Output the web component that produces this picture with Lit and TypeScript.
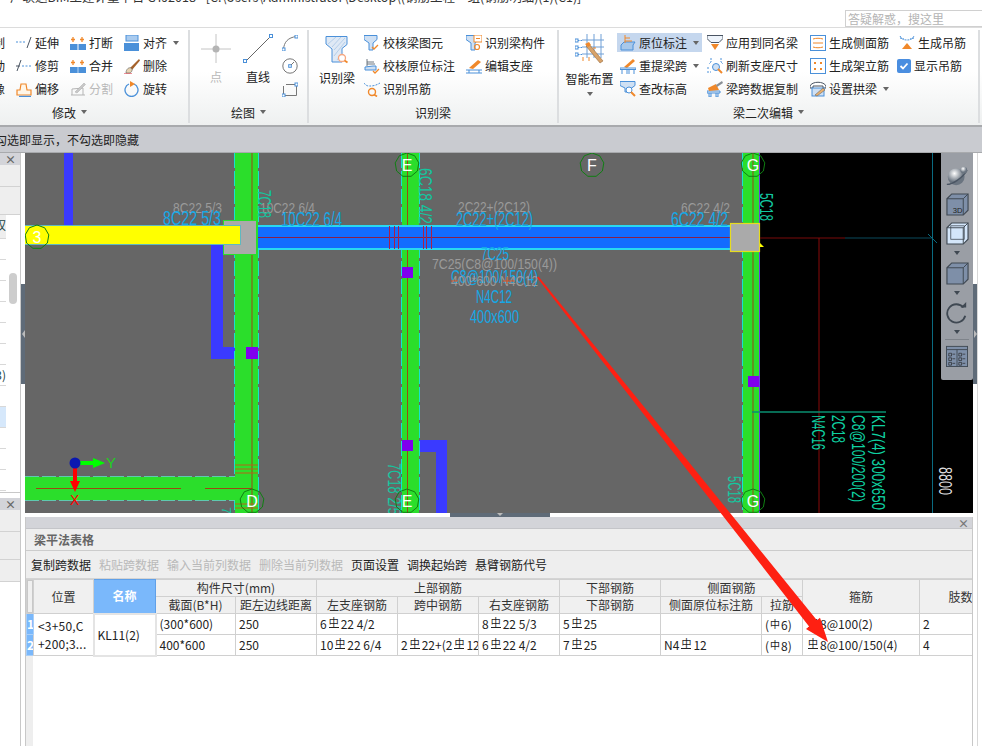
import { LitElement, html, css, svg } from "lit";
import { customElement } from "lit/decorators.js";

const B = "#4a90d9", O = "#f0882a", G = "#8a8f96", D = "#4a5563";
const ic = (c: any, s = 16, vb = 16) => html`<svg class="ic" width=${s} height=${s} viewBox="0 0 ${vb} ${vb}" fill="none">${c}</svg>`;

const icons: Record<string, any> = {
  extend: svg`<path d="M0 7h10" stroke=${B} stroke-dasharray="2 1.5"/><path d="M11 13 15 2" stroke=${D}/>`,
  trim: svg`<path d="M5 2 1 13" stroke=${D}/><path d="M0 8h4" stroke=${D}/><path d="M6 8h10" stroke=${B} stroke-dasharray="2 1.5"/>`,
  offset: svg`<path d="M1 14V9h3l1-6h5l1 6h4v5z" stroke=${O} stroke-width="1.2" fill="#fff6e8"/><path d="M3 15.5h12" stroke=${B} stroke-width="1.4"/>`,
  brk: svg`<rect x="0" y="9" width="7.5" height="6" fill=${B}/><rect x="8.5" y="9" width="7.5" height="6" fill=${B}/><path d="M3 2v5M1 4.5h4M12 2v5M10 4.5h4" stroke=${O} stroke-width="1.3"/>`,
  merge: svg`<rect x="0" y="9" width="16" height="6" fill=${B}/><path d="M8 9v6" stroke="#b8d4f0"/><path d="M3 2v5M1 4.5h4M12 2v5M10 4.5h4" stroke=${O} stroke-width="1.3"/>`,
  split: svg`<path d="M1 14h14M2 14V8l11-1v7" stroke="#b5b5b5"/><path d="M5 11 14 2l1.5 1.5L7 12z" fill="#c8c8c8" stroke="#aaa" stroke-width=".5"/>`,
  align: svg`<rect x="2" y="0" width="12" height="6" fill="#a9cbef" stroke=${B}/><rect x="0" y="8" width="15" height="8" fill=${B}/>`,
  del: svg`<path d="M6 10 15 1l1 1.5L8 12z" fill="#a5622b"/><path d="M2 15c0-4 3-6 5-5s1 4-1 5z" fill="#e6d2b0" stroke="#555" stroke-width=".6"/><path d="M0 16h8" stroke="#d23"/>`,
  rotate: svg`<path d="M5 3a6.5 6.5 0 1 0 5 0" stroke=${B} stroke-width="1.3"/><path d="M6 0v6l5-3z" fill=${O}/>`,
  arc: svg`<path d="M1.5 14.5C2 7 6 2.5 14.5 1.5" stroke="#777"/><rect x="0" y="13" width="3" height="3" fill="#fff" stroke=${B}/><rect x="13" y="0" width="3" height="3" fill="#fff" stroke=${B}/>`,
  circle: svg`<circle cx="8" cy="8" r="7.2" stroke="#777"/><rect x="6.7" y="6.7" width="2.6" height="2.6" fill="#fff" stroke=${B}/><path d="M9 7 12 4" stroke="#777"/>`,
  rect: svg`<path d="M1.5 5v9.5h13V3.500H4" stroke="#777"/><rect x="0" y="13" width="3" height="3" fill="#fff" stroke=${B}/><rect x="13" y="2" width="3" height="3" fill="#fff" stroke=${B}/>`,
  chkBeam: svg`<path d="M0 .5h13v4L9 8v7H5V8L0 4.500z" fill="#cfe0f3" stroke=${B}/><path d="M8 12l2 2 4-4" stroke=${O} stroke-width="1.3"/>`,
  chkMark: svg`<path d="M1 12V9l8-1h3v4H1z" fill="#cfe0f3" stroke=${B}/><path d="M3 8V1M3 4h7M3 6h8" stroke=${D} stroke-width=".8"/><path d="M9 13l2 2 4-4" stroke=${O} stroke-width="1.3"/>`,
  hanger: svg`<path d="M0 2c2 3 4 3 6 3s5 0 10-3" stroke=${B} stroke-dasharray="2 1.200"/><circle cx="8" cy="11" r="3.500" stroke=${O} stroke-width="1.400"/><path d="M10 13.500l3 2" stroke=${O} stroke-width="1.600"/>`,
  comp: svg`<path d="M0 .5h13v4L9 8v7H5V8L0 4.500z" fill="#cfe0f3" stroke=${B}/><rect x="8" y="0" width="8" height="7" fill="#fff" stroke=${O}/><path d="M10 3.500h4" stroke=${O}/><circle cx="11" cy="12" r="2.500" stroke=${O} stroke-width="1.200"/>`,
  editSup: svg`<path d="M0 12h16M0 15h16M3 12v3M13 12v3" stroke=${B}/><path d="M3 10 12 2l3 2-8 7z" fill=${O}/>`,
  origin: svg`<path d="M1 10l3-3h11l-2 3v5H1z" fill="#a8c8ea" stroke=${B}/><path d="M5 0v8M5 3h5M5 6h7" stroke=${O}/>`,
  relift: svg`<path d="M4 9 13 1l2 2-8 7z" fill=${O}/><path d="M0 10h16v1.500H0zM2 12v4M7 12v4M9 12v4M14 12v4" stroke=${B}/>`,
  lookup: svg`<path d="M0 .5h15v4l-4 3V11H5V7L0 4.500z" fill="#cfe0f3" stroke=${B}/><circle cx="9" cy="9" r="3" fill="#fff" stroke=${B} stroke-width="1"/><path d="M11 11l4 4" stroke=${O} stroke-width="2"/>`,
  apply: svg`<path d="M0 .5h16v3l-4 4H4l-4-4z" stroke=${D} fill="#eef4fb"/><path d="M4 9h8l-4 6z" fill=${O}/>`,
  refresh: svg`<circle cx="9" cy="9" r="3.500" fill="#cfe0f3" stroke=${B}/><path d="M4 0v4L2 6M14 0v4l2 2M0 10h3M0 14h4" stroke=${B} stroke-dasharray="2 1"/><path d="M11 11l4 4" stroke=${O} stroke-width="2"/>`,
  copySpan: svg`<path d="M0 10h13v2H0zM2 12v4h2v-4M9 12v4h2v-4" fill="#e6eef7" stroke=${B}/><path d="M1 7 9 3l3 6-10 1z" fill=${O}/><path d="M9 4 15 0l1 2-6 4z" fill=${G}/>`,
  side: svg`<rect x=".5" y=".5" width="15" height="15" fill="#fff" stroke=${B}/><path d="M3 4c3-1 7-1 10 0M3 8h10M3 12c3 1 7 1 10 0" stroke=${O}/>`,
  frame: svg`<rect x=".5" y=".5" width="15" height="15" fill="#fff" stroke=${B}/><rect x="4" y="4" width="2" height="2" fill=${O}/><rect x="10" y="4" width="2" height="2" fill=${O}/><rect x="4" y="10" width="2" height="2" fill=${O}/><rect x="10" y="10" width="2" height="2" fill=${O}/>`,
  arch: svg`<path d="M0 5C2 0 14 0 16 5v2h-3V5H3v2H0z" fill="#fff" stroke=${D}/><rect x="2" y="7" width="12" height="8" fill="#cfe0f3" stroke=${B}/><path d="M5 14 13 7l2 2-8 6z" fill="#e8b070" stroke="#555" stroke-width=".5"/>`,
  genHang: svg`<path d="M1 1c2 4 5 4 7 4s5 0 7-4M1 3l4 1M15 3l-4 1" stroke=${B} stroke-dasharray="2 1"/><path d="M3 14h10L8 8z" fill=${O}/>`,
};
const bigBeam = svg`<path d="M1 .5h21v8l-5 4V26H7V13L1 8z" fill="#dfe9f5" stroke=${B}/><path d="M3 8 11 1M7 11l9-10M9 14l11-12M9 20l11-14M12 24l6-8" stroke="#a9c6e6" stroke-width=".8"/><circle cx="17" cy="22" r="3.500" fill="#fff" stroke="#f6a882" stroke-width="1.300"/><path d="M19.500 24.500l3 2" stroke=${O} stroke-width="1.800"/>`;
const smart = svg`<path d="M7 6h22M7 13h22M7 20h22M12 0v24M19 0v24M26 0v24" stroke="#6f9fd6"/><rect x="0" y="5" width="3" height="3" fill="#fff" stroke=${B}/><rect x="0" y="12" width="3" height="3" fill="#fff" stroke=${B}/><rect x="0" y="19" width="3" height="3" fill="#fff" stroke=${B}/><path d="M3 6.500h5M3 13.500h5M3 20.500h5" stroke=${B} stroke-dasharray="1.500 1"/><path d="M11 12l3-2 14 17-3 2z" fill="#d8a36a" stroke="#8a5a2a" stroke-width=".5"/><path d="M10 10l4-2 2 3-3 2z" fill=${O}/><path d="M21 14h-3M8 23v4M14 23v4" stroke=${O}/>`;

const rb = (before: string, after: string) => html`${before}<span class="rb">中</span>${after}`;

const cad = (x: number, y: number, t: string, w: number, size: number, color: string, rot = 0) =>
  svg`<text x=${x} y=${y} textLength=${w} lengthAdjust="spacingAndGlyphs" font-size=${size} fill=${color} font-family="Liberation Sans, sans-serif" transform=${rot ? `rotate(${rot} ${x} ${y})` : ""}>${t}</text>`;

const hex = (cx: number, cy: number, l: string) => {
  const pts = Array.from({ length: 9 }, (_, i) => {
    const a = (i / 9) * Math.PI * 2 - Math.PI / 2;
    return `${(cx + 12 * Math.cos(a)).toFixed(1)},${(cy + 12 * Math.sin(a)).toFixed(1)}`;
  }).join(" ");
  return svg`<polygon points=${pts} fill="none" stroke="#0f7f12"/><text x=${cx} y=${cy + 6} text-anchor="middle" font-size="16" fill="#fff" font-family="Liberation Sans, sans-serif">${l}</text>`;
};

const col = (x1: number, x2: number, red: number) => svg`
  <rect x=${x1} y="153" width=${x2 - x1} height="360" fill="#2bde2b"/>
  <path d="M${x1 - 0.5} 153V513M${x2 + 0.5} 153V513" stroke="#19e0d0" stroke-dasharray="15 3"/>
  <path d="M${red} 153V513" stroke="#9a4a12"/>`;

const CY = "#14a8e6", GR = "#9a9a9a", TL = "#12c8a0", KL = "#0fd0a0";

const canvas = svg`
  <rect x="25" y="153" width="948" height="360" fill="#666"/>
  <rect x="760" y="153" width="213" height="360" fill="#000"/>
  <rect x="64" y="153" width="9" height="72" fill="#3a3aff"/>
  <path d="M211 244h12v103h24v12h-36z" fill="#3a3aff"/>
  <path d="M419 440h28v73h-11v-61h-17z" fill="#3a3aff"/>
  ${col(235, 258, 252)}
  ${col(402, 419, 407.5)}
  ${col(743, 759, 753)}
  <path d="M759.500 153V513" stroke="#6a3ae0"/>
  <rect x="25" y="477" width="210" height="23" fill="#2bde2b"/>
  <path d="M25 476.500H235M25 500.500H235" stroke="#5fc8b0" stroke-dasharray="14 3"/>
  <path d="M36 488.500H181M205 488.500H252" stroke="#9a4a12"/>
  <path d="M235 465h23M235 469h23M235 473h23M235 504h23M235 508h23" stroke="#b8621a" stroke-width="1.200"/>
  <rect x="258" y="225" width="473" height="25" fill="#28d8f0"/>
  <rect x="258" y="227" width="473" height="21" fill="#126cff"/>
  <path d="M258 237.500H731" stroke="#8a2048"/>
  <path d="M389.500 226v23M394.500 226v23M398.500 226v23M423.500 226v23M426.500 226v23M431.500 226v23" stroke="#a8204a"/>
  <rect x="223.500" y="220.500" width="33" height="34" fill="#aaa" stroke="#2bde2b"/>
  <rect x="25" y="225" width="216" height="20" fill="#5fb8c0"/>
  <rect x="25" y="226" width="215" height="18" fill="#ff0"/>
  <rect x="730.500" y="223.500" width="29" height="28" fill="#aaa" stroke="#e6dc20" stroke-width="1.200"/>
  <path d="M760 243l4 4h-4z" fill="#ff0"/>
  <rect x="246" y="347" width="12" height="12" fill="#8000ee"/>
  <rect x="402" y="267" width="11" height="11" fill="#8000ee"/>
  <rect x="402" y="440" width="11" height="11" fill="#8000ee"/>
  <rect x="748" y="376" width="11" height="11" fill="#8000ee"/>
  <path d="M760 238h85" stroke="#7a0a0a"/><path d="M845 238h88" stroke="#0a4a5c"/>
  <path d="M928 234l9 9" stroke="#0a6a80"/>
  <path d="M819 238V513" stroke="#8a0a0a"/>
  <path d="M932.500 153V513" stroke="#0a6a80"/>
  <path d="M752 412h134" stroke="#0a8f70" stroke-width="1.500"/>

  ${cad(173, 213, "8C22 5/3", 49, 15, GR)}
  ${cad(163, 225, "8C22 5/3", 58, 21, CY)}
  ${cad(260, 213, "10C22 6/4", 55, 15, GR)}
  ${cad(281, 226, "10C22 6/4", 61, 21, CY)}
  ${cad(458, 212, "2C22+(2C12)", 72, 15, GR)}
  ${cad(456, 226, "2C22+(2C12)", 77, 21, CY)}
  ${cad(681, 213, "6C22 4/2", 49, 15, GR)}
  ${cad(671, 226, "6C22 4/2", 57, 21, CY)}
  ${cad(481, 260, "7C25", 28, 18, CY)}
  ${cad(432, 269, "7C25(C8@100/150(4))", 125, 15, GR)}
  ${cad(451, 283, "C8@100/150(4)", 87, 19, CY)}
  ${cad(451, 286, "400*600 N4C12", 87, 15, GR)}
  <path d="M451 281h7M503 281h12M507 277v7" stroke="#e0501a"/>
  ${cad(476, 303, "N4C12", 36, 19, CY)}
  ${cad(470, 323, "400x600", 49, 19, CY)}
  ${cad(258, 190, "7C18", 28, 18, TL, 90)}
  ${cad(419, 168, "6C18 4/2", 56, 18, TL, 90)}
  ${cad(760, 193, "5C18", 28, 18, TL, 90)}
  ${cad(728, 476, "5C18", 27, 18, TL, 90)}
  ${cad(388, 463, "7C18 2/5", 52, 18, TL, 90)}
  ${cad(872, 415, "KL7(4) 300x650", 95, 18, KL, 90)}
  ${cad(852, 415, "C8@100/200(2)", 87, 18, KL, 90)}
  ${cad(832, 415, "2C18", 28, 18, KL, 90)}
  ${cad(812, 415, "N4C16", 35, 18, KL, 90)}
  ${cad(939, 467, "8800", 28, 18, "#ddd", 90)}
  ${cad(222, 507, "7", 7, 12, TL, 90)}

  ${hex(37, 237, "3")}${hex(407, 165, "E")}${hex(592, 165, "F")}${hex(753, 165, "G")}
  ${hex(252, 501, "D")}${hex(407, 501, "E")}${hex(753, 501, "G")}

  <path d="M80 463h15" stroke="#0f0" stroke-width="4"/><path d="M93 458l12 5-12 5z" fill="#0f0"/>
  <path d="M75 468v16" stroke="#f00" stroke-width="4"/><path d="M70 481h10l-5 11z" fill="#f00"/>
  <circle cx="75" cy="463" r="5.500" fill="#0a18b0"/>
  <text x="106" y="468" font-size="15" fill="#1fd01f" font-family="Liberation Sans, sans-serif">Y</text>
  <text x="70" y="505" font-size="14" fill="#f00" font-family="Liberation Sans, sans-serif">X</text>
`;

const cube = (inner: any, fill: string) => html`<svg class="tb-ic" width="23" height="23" viewBox="0 0 24 24" fill="none">
  <path d="M1 6 6 1h17v17l-5 5H1z" fill=${fill} stroke="#3f4852" stroke-width="1.200"/>
  <path d="M1 6h17v17M18 6l5-5" stroke="#3f4852" stroke-width="1"/>${inner}</svg>`;

@customElement("app-root")
export class AppRoot extends LitElement {
  static styles = css`
    :host { display: block; width: 982px; height: 746px; position: relative; overflow: hidden; background: #fff;
      font-family: "Noto Sans CJK SC", "Liberation Sans", sans-serif; font-size: 12px; color: #222; }
    svg { display: block; flex: none; }
    .title { height: 27px; overflow: hidden; position: relative; border-bottom: 1px solid #dcdcdc; box-sizing: content-box; }
    .title-t { margin-top: -12px; padding-left: 10px; font-size: 12.5px; line-height: 18px; white-space: nowrap; color: #333; }
    .search { position: absolute; left: 845px; top: 10px; width: 137px; height: 15px; border: 1px solid #d0d0d0; color: #b4b4b4; line-height: 15px; padding-left: 2px; box-sizing: content-box; }
    .ribbon { display: flex; height: 97px; background: linear-gradient(#fff 45%, #eef0f0 100%); border-bottom: 2px solid #a8aaad; }
    .grp { display: flex; flex-direction: column; border-right: 2px solid #dcdee0; margin: 2px 0; padding-top: 1px; box-sizing: border-box; }
    .g1 { width: 190px; } .g2 { width: 119px; } .g3 { width: 250px; } .g4 { width: 421px; }
    .body { display: grid; height: 69px; grid-auto-flow: column; grid-template-rows: repeat(3, 23px); }
    .g1 .body { grid-template-columns: 16px 54px 54px 1fr; }
    .g2 .body { grid-template-columns: 48px 36px 1fr; padding-left: 2px; }
    .g3 .body { grid-template-columns: 54px 102px 1fr; padding-left: 1px; }
    .g4 .body { grid-template-columns: 55px 90px 103px 87px 1fr; padding-left: 3px; }
    .big { grid-row: 1 / span 3; display: flex; flex-direction: column; align-items: center; padding-top: 3px; white-space: nowrap; }
    .big .lbl { height: 16px; line-height: 16px; margin-top: 5px; }
    .g3 .big { padding-top: 5px; } .g3 .big .lbl { margin-top: 6px; }
    .g4 .big { padding-top: 3px; } .g4 .big .lbl { margin-top: 7px; }
    .big .caret { margin-top: 5px; }
    .dis { color: #b9b9b9; }
    .r { display: flex; align-items: center; gap: 3px; white-space: nowrap; height: 23px; }
    .clip { width: 5px; overflow: hidden; justify-content: flex-end; }
    .clip span { flex: none; }
    .ico-only { justify-content: flex-start; padding-left: 6px; }
    .act { background: #c5d7ee; width: 85px; height: 19px; padding-left: 3px; margin: 2px 0; box-sizing: border-box; }
    .pad3 { padding-left: 3px; }
    .pad2 { padding-left: 2px; }
    .caret { flex: none; width: 0; height: 0; border-left: 3.500px solid transparent; border-right: 3.500px solid transparent; border-top: 4px solid #666; }
    .r .caret { margin-left: 3px; }
    .chk { width: 14px; height: 14px; background: #4a8ee0; border-radius: 2px; flex: none; display: flex; align-items: center; justify-content: center; }
    .glabel { display: flex; justify-content: center; align-items: center; gap: 5px; height: 20px; margin-top: 2px; }
    .g1 .glabel { justify-content: flex-start; padding-left: 52px; }
    .info { height: 25px; line-height: 25px; background: #c9cbd0; border-bottom: 1px solid #a8aaad; padding-left: 0; white-space: nowrap; overflow: hidden; }
    .info span { margin-left: -5px; display: inline-block; }
    .main { display: flex; height: 593px; }
    .left { width: 21px; display: flex; flex-direction: column; gap: 5px; border-right: 1px solid #c8c8c8; box-sizing: border-box; flex: none; }
    .pane-a { height: 340px; border-bottom: 1px solid #c8c8c8; position: relative; box-sizing: border-box; }
    .pane-b { flex: 1; }
    .phead { height: 12px; background: #d3d4d9; display: flex; align-items: center; justify-content: flex-end; padding-right: 4px; font-size: 11px; color: #666; line-height: 12px; font-weight: bold; }
    .prow { background: #eeeeee; border-bottom: 1px solid #d2d2d2; box-sizing: border-box; }
    .h22 { height: 22px; } .h28 { height: 28px; }
    .lrow { width: 6px; height: 21px; border-bottom: 1px solid #d8d8d8; box-sizing: border-box; overflow: hidden; white-space: nowrap; line-height: 20px; font-size: 12px; display: flex; justify-content: flex-end; }
    .lrow.first { height: 24px; background: #eee; }
    .lrow.sel { background: #d6e8fb; }
    .lrow span { flex: none; color: #244; }
    .sb { position: absolute; left: 9px; top: 120px; width: 8px; height: 31px; background: #cdcdcd; border-radius: 4px; }
    .gut { width: 4px; flex: none; padding-top: 131px; }
    .gut div { height: 100px; background: #5f6b78; display: flex; align-items: center; justify-content: center; }
    .ar-l { width: 0; height: 0; border-top: 4px solid transparent; border-bottom: 4px solid transparent; border-right: 3px solid #bbb; }
    .ar-r { width: 0; height: 0; border-top: 4px solid transparent; border-bottom: 4px solid transparent; border-left: 3px solid #bbb; }
    .center { width: 948px; flex: none; display: flex; flex-direction: column; }
    .cv { height: 360px; position: relative; flex: none; }
    .tb { position: absolute; right: 0; top: 0; width: 32px; height: 227px; background: #9a9ea5; border-radius: 0 0 2px 2px; display: flex; flex-direction: column; align-items: center; padding-top: 12px; box-sizing: border-box; }
    .tb-globe { margin-bottom: 6px; }
    .tb-ic { margin-bottom: 6px; }
    .tb-ic.noar { margin-bottom: 6px; }
    .tb-ar { width: 0; height: 0; border-left: 3px solid transparent; border-right: 3px solid transparent; border-top: 4px solid #3f4852; margin: 0 0 7px; flex: none; }
    .tb-ar.last { margin: 6px 0 5px; }
    .tb-sep { width: 24px; height: 1px; background: #7e838a; margin-bottom: 5px; flex: none; }
    .split { height: 4px; flex: none; padding-left: 425px; }
    .split div { width: 100px; height: 4px; background: #5f6b78; display: flex; justify-content: center; }
    .ar-d { width: 0; height: 0; border-left: 3px solid transparent; border-right: 3px solid transparent; border-top: 3px solid #bbb; }
    .panel { flex: 1; border-left: 1px solid #c8c8c8; border-right: 1px solid #c8c8c8; display: flex; flex-direction: column; min-height: 0; }
    .phead2 { height: 11px; background: #d3d4d9; border-bottom: 1px solid #c4c5c9; display: flex; align-items: center; justify-content: flex-end; padding-right: 3px; color: #777; font-size: 11px; font-weight: bold; flex: none; box-sizing: content-box; }
    .ptitle { height: 21px; line-height: 21px; background: #eee; border-bottom: 1px solid #ccc; padding-left: 8px; color: #666; font-weight: 700; flex: none; }
    .tools { height: 28px; background: #eee; display: flex; gap: 8px; align-items: center; padding-left: 5px; flex: none; border-bottom: 1px solid #d4d4d4; box-sizing: border-box; white-space: nowrap; }
    .twrap { flex: 1; overflow: hidden; background: linear-gradient(90deg, #eee 7px, #fff 7px); min-height: 0; }
    table { border-collapse: collapse; table-layout: fixed; width: 975px; font-size: 12px; }
    .c7 { width: 7px; } .c60 { width: 60px; } .c62 { width: 62px; } .c80 { width: 80px; } .c81 { width: 81px; }
    .c101 { width: 101px; } .c41 { width: 41px; } .c117 { width: 117px; } .c82 { width: 82px; }
    th, td { border: 1px solid #d0d0d0; padding: 0 3px; overflow: hidden; white-space: nowrap; box-sizing: border-box; font-weight: normal; }
    th { background: #f0f0f0; text-align: center; color: #333; height: 17px; line-height: 14px; }
    td { background: #fff; height: 21px; line-height: 18px; padding-left: 3px; }
    th.corner { padding: 0; background: #eee; }
    .corner div { border: 1px solid #c8c8c8; height: 31px; background: #f0f0f0; }
    th.name { background: #7ab8fb; color: #fff; font-weight: 700; border: 1px solid #60a0e8; }
    td.num { background: #7ab8fb; color: #fff; font-weight: 700; padding: 0; text-align: center; font-size: 12px; border-color: #a9cff8; }
    td.pos { white-space: normal; line-height: 18px; padding: 0 3px 0 4px; letter-spacing: .2px; }
    td.nm { border: 2px solid #e4e4e4; }
    .rb { display: inline-block; font-size: 10px; line-height: 10px; border-bottom: 1px solid #222; height: 10px; vertical-align: 3px; margin: 0 2px; }
    .pl { display: inline-block; font-size: 10px; vertical-align: 2px; margin: 0 1px; }
    .rightc { flex: 1; display: flex; }
    .rest { flex: 1; border-left: 1px solid #d8d8d8; background: #fff; }
    .arrow { position: absolute; left: 0; top: 0; pointer-events: none; }
  `;

  private row(icon: string, text: string, o: { caret?: boolean; dis?: boolean; cls?: string } = {}) {
    return html`<div class="r ${o.dis ? "dis" : ""} ${o.cls ?? ""}">${ic(icons[icon])}<span>${text}</span>${o.caret ? html`<i class="caret"></i>` : ""}</div>`;
  }
  private clip(t: string) { return html`<div class="r clip"><span>${t}</span></div>`; }
  private icoOnly(n: string) { return html`<div class="r ico-only">${ic(icons[n])}</div>`; }

  render() {
    const rows = Array.from({ length: 12 }, (_, i) => i);
    return html`
      <div class="title"><div class="title-t">广联达BIM土建计量平台 GTJ2018 - [C:\\Users\\Administrator\\Desktop\\(钢筋工程一组(钢筋明细)(1)(C1)]</div>
        <div class="search">答疑解惑，搜这里</div></div>
      <div class="ribbon">
        <div class="grp g1"><div class="body">
            ${this.clip("复制")}${this.clip("移动")}${this.clip("镜像")}
            ${this.row("extend", "延伸")}${this.row("trim", "修剪")}${this.row("offset", "偏移")}
            ${this.row("brk", "打断")}${this.row("merge", "合并")}${this.row("split", "分割", { dis: true })}
            ${this.row("align", "对齐", { caret: true })}${this.row("del", "删除")}${this.row("rotate", "旋转")}
          </div><div class="glabel">修改<i class="caret"></i></div></div>
        <div class="grp g2"><div class="body">
            <div class="big dis"><svg width="30" height="30" viewBox="0 0 30 30" fill="none"><path d="M15 0v29M0 15h30" stroke="#c4c4c4"/><circle cx="15" cy="15" r="3.500" fill="#b4b4b4"/></svg><div class="lbl">点</div></div>
            <div class="big"><svg width="30" height="30" viewBox="0 0 30 30" fill="none"><path d="M2 28 28 2" stroke="#666"/><rect x=".5" y="25.500" width="3" height="3" fill="#fff" stroke=${B}/><rect x="26.500" y=".5" width="3" height="3" fill="#fff" stroke=${B}/></svg><div class="lbl">直线</div></div>
            ${this.icoOnly("arc")}${this.icoOnly("circle")}${this.icoOnly("rect")}
          </div><div class="glabel">绘图<i class="caret"></i></div></div>
        <div class="grp g3"><div class="body">
            <div class="big"><svg width="24" height="28" viewBox="0 0 24 28" fill="none">${bigBeam}</svg><div class="lbl">识别梁</div></div>
            ${this.row("chkBeam", "校核梁图元")}${this.row("chkMark", "校核原位标注")}${this.row("hanger", "识别吊筋")}
            ${this.row("comp", "识别梁构件")}${this.row("editSup", "编辑支座")}<div></div>
          </div><div class="glabel">识别梁</div></div>
        <div class="grp g4"><div class="body">
            <div class="big"><svg width="30" height="30" viewBox="0 0 30 30" fill="none">${smart}</svg><div class="lbl">智能布置</div><i class="caret"></i></div>
            ${this.row("origin", "原位标注", { caret: true, cls: "act" })}${this.row("relift", "重提梁跨", { caret: true, cls: "pad3" })}${this.row("lookup", "查改标高", { cls: "pad3" })}
            ${this.row("apply", "应用到同名梁")}${this.row("refresh", "刷新支座尺寸")}${this.row("copySpan", "梁跨数据复制")}
            ${this.row("side", "生成侧面筋")}${this.row("frame", "生成架立筋")}${this.row("arch", "设置拱梁", { caret: true })}
            ${this.row("genHang", "生成吊筋", { cls: "pad2" })}
            <div class="r"><div class="chk"><svg width="10" height="10" viewBox="0 0 10 10" fill="none"><path d="M1.500 5l2.500 2.500L8.500 2.500" stroke="#fff" stroke-width="1.800"/></svg></div><span>显示吊筋</span></div>
            <div></div>
          </div><div class="glabel">梁二次编辑<i class="caret"></i></div></div>
      </div>
      <div class="info"><span>勾选即显示，不勾选即隐藏</span></div>
      <div class="main">
        <div class="left">
          <div class="pane-a">
            <div class="phead">×</div>
            <div class="prow h22"></div><div class="prow h28"></div>
            <div class="lrow first"><span>权</span></div>
            ${rows.map((i) => html`<div class="lrow ${i === 8 ? "sel" : ""}">${i === 6 ? html`<span>3)</span>` : ""}</div>`)}
            <div class="sb"></div>
          </div>
          <div class="pane-b">
            <div class="phead">×</div>
            <div class="prow h22"></div><div class="prow h28"></div><div class="prow h22"></div>
          </div>
        </div>
        <div class="gut"><div><i class="ar-l"></i></div></div>
        <div class="center">
          <div class="cv">
            <svg width="948" height="360" viewBox="25 153 948 360">${canvas}</svg>
            <div class="tb">
              <svg class="tb-globe" width="22" height="22" viewBox="0 0 26 26" fill="none"><defs><radialGradient id="gl" cx=".4" cy=".3"><stop offset="0" stop-color="#fff"/><stop offset="1" stop-color="#6a7480"/></radialGradient></defs><circle cx="12" cy="14" r="10" fill="url(#gl)"/><path d="M1 23C8 23 20 15 25 6" stroke="#4a5563" stroke-width="1.500"/><circle cx="21" cy="6" r="4" fill="url(#gl)"/></svg>
              ${cube(svg`<text x="7" y="21" font-size="8" fill="#222" font-family="Liberation Sans, sans-serif">3D</text>`, "#7e8fa8")}
              ${cube(svg`<rect x="5" y="4" width="14" height="14" stroke="#3f4852" stroke-width=".8"/>`, "#d4e6fa")}
              <i class="tb-ar"></i>
              ${cube("", "#7e8fa8")}
              <i class="tb-ar"></i>
              <svg width="22" height="22" viewBox="0 0 24 24" fill="none"><path d="M19 6A10 10 0 1 0 21 15" stroke="#3f4852" stroke-width="2"/><path d="M16 6h6V0z" fill="#3f4852"/></svg>
              <i class="tb-ar last"></i>
              <div class="tb-sep"></div>
              <svg width="22" height="22" viewBox="0 0 24 24" fill="none"><rect x=".5" y="1.500" width="23" height="22" fill="#7e8fa8" stroke="#3f4852"/><path d="M1 5h22M12 5v18" stroke="#3f4852"/><path d="M3 9h3v3H3zM3 14h3v3H3zM3 19h3v3H3zM14 9h3v3h-3zM14 14h3v3h-3zM14 19h3v3h-3zM7 10h3M7 15h3M7 20h3M18 10h3M18 15h3M18 20h3" stroke="#222" stroke-width=".7"/></svg>
            </div>
          </div>
          <div class="split"><div><i class="ar-d"></i></div></div>
          <div class="panel">
            <div class="phead2">×</div>
            <div class="ptitle">梁平法表格</div>
            <div class="tools">
              <span>复制跨数据</span><span class="dis">粘贴跨数据</span><span class="dis">输入当前列数据</span><span class="dis">删除当前列数据</span>
              <span>页面设置</span><span>调换起始跨</span><span>悬臂钢筋代号</span>
            </div>
            <div class="twrap">
              <table>
                <colgroup><col class="c7"/><col class="c60"/><col class="c62"/><col class="c80"/><col class="c81"/><col class="c81"/><col class="c81"/><col class="c81"/><col class="c101"/><col class="c101"/><col class="c41"/><col class="c117"/><col class="c82"/></colgroup>
                <tr>
                  <th class="corner" rowspan="2"><div></div></th><th rowspan="2">位置</th><th class="name" rowspan="2">名称</th>
                  <th colspan="2">构件尺寸(mm)</th><th colspan="3">上部钢筋</th><th>下部钢筋</th><th colspan="2">侧面钢筋</th>
                  <th rowspan="2">箍筋</th><th rowspan="2">肢数</th>
                </tr>
                <tr><th>截面(B*H)</th><th>距左边线距离</th><th>左支座钢筋</th><th>跨中钢筋</th><th>右支座钢筋</th><th>下部钢筋</th><th>侧面原位标注筋</th><th>拉筋</th></tr>
                <tr>
                  <td class="num">1</td><td class="pos" rowspan="2">&lt;3+50,C +200;3...</td><td class="nm" rowspan="2">KL11(2)</td>
                  <td>(300*600)</td><td>250</td><td>${rb("6", "22 4/2")}</td><td></td><td>${rb("8", "22 5/3")}</td><td>${rb("5", "25")}</td><td></td>
                  <td>(<span class="pl">中</span>6)</td><td>${rb("", "8@100(2)")}</td><td>2</td>
                </tr>
                <tr>
                  <td class="num">2</td>
                  <td>400*600</td><td>250</td><td>${rb("10", "22 6/4")}</td><td>${rb("2", "22+(2")}<span class="rb">中</span>12</td><td>${rb("6", "22 4/2")}</td><td>${rb("7", "25")}</td><td>N4<span class="rb">中</span>12</td>
                  <td>(<span class="pl">中</span>8)</td><td>${rb("", "8@100/150(4)")}</td><td>4</td>
                </tr>
              </table>
            </div>
          </div>
        </div>
        <div class="rightc">
          <div class="gut"><div><i class="ar-r"></i></div></div>
          <div class="rest"></div>
        </div>
      </div>
      <svg class="arrow" width="982" height="746" viewBox="0 0 982 746">
        <polygon points="537,277.500 538.500,276.500 816.900,620.200 820,617.700 828,642 806,628.900 809.100,626.400" fill="#fe2012"/>
      </svg>
    `;
  }
}
